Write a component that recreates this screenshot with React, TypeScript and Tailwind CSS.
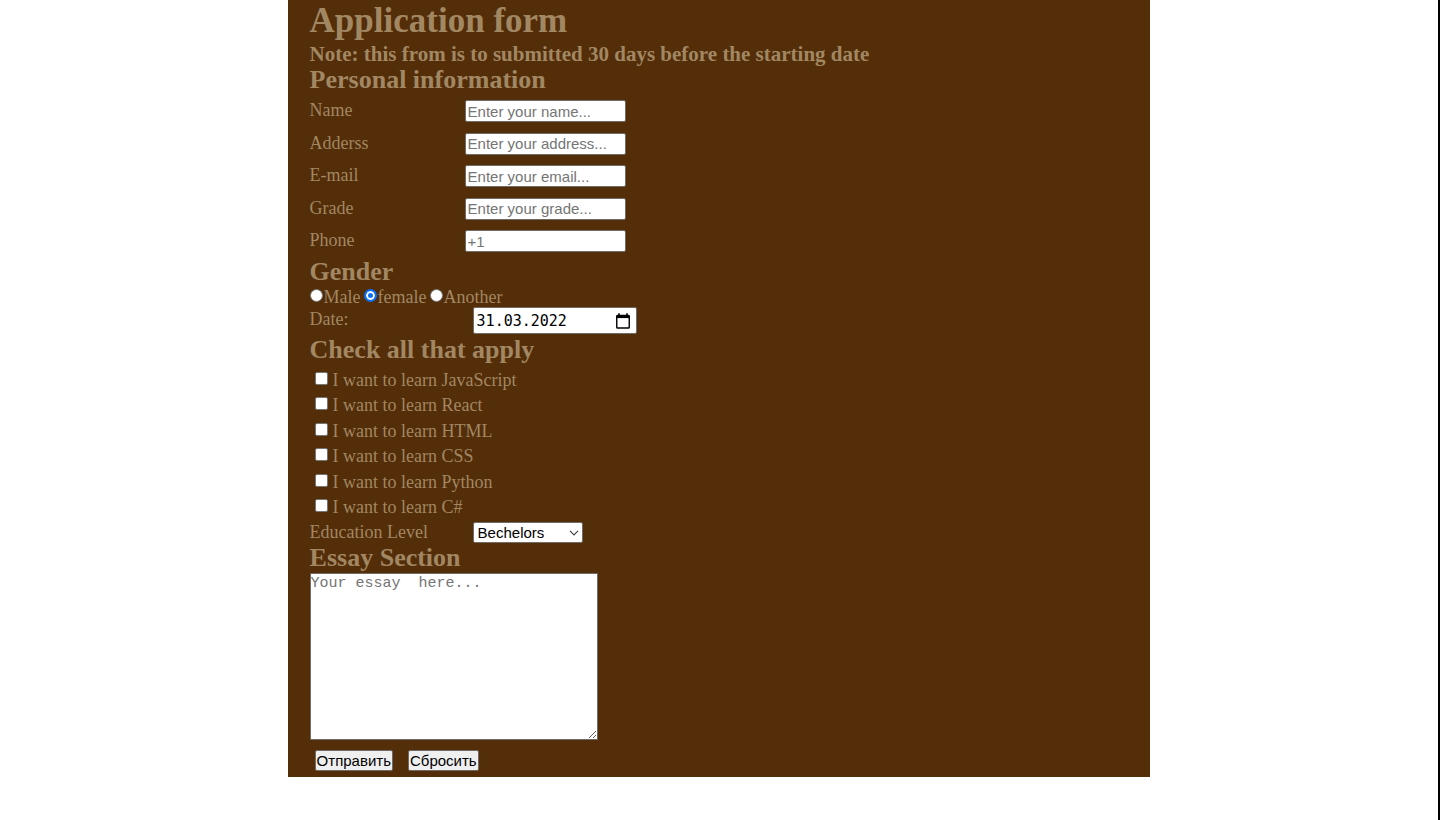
import { useState } from 'react';
import type { ReactNode } from 'react';

const personalFields = [
  { id: 'name', label: 'Name', type: 'text', placeholder: 'Enter your name...' },
  { id: 'address', label: 'Adderss', type: 'text', placeholder: 'Enter your address...' },
  { id: 'email', label: 'E-mail', type: 'email', placeholder: 'Enter your email...' },
  { id: 'grade', label: 'Grade', type: 'text', placeholder: 'Enter your grade...' },
  { id: 'phone', label: 'Phone', type: 'tel', placeholder: '+1' },
];

const genders = ['Male', 'female', 'Another'];
const topics = ['JavaScript', 'React', 'HTML', 'CSS', 'Python', 'C#'];
const levels = ['Bechelors', 'Masters', 'Doctorate'];

function SectionTitle({ children }: { children: ReactNode }) {
  return <h2 className="text-[26px] leading-7 font-bold">{children}</h2>;
}

function CalendarIcon() {
  return (
    <svg viewBox="0 0 16 16" className="size-4" fill="none" stroke="#000" aria-hidden="true">
      <rect x="1.75" y="2.5" width="12.5" height="12.5" rx="0.8" strokeWidth="1.4" />
      <path d="M1.5 3.8h13" strokeWidth="2.6" />
      <path d="M4 0.3v3M12 0.3v3" strokeWidth="1.6" />
    </svg>
  );
}

function ChevronIcon() {
  return (
    <svg viewBox="0 0 10 6" className="h-1.5 w-2.5" fill="none" stroke="#444" strokeWidth="1.2" aria-hidden="true">
      <path d="M1 0.8 5 4.8 9 0.8" />
    </svg>
  );
}

export default function App() {
  const [gender, setGender] = useState('female');
  const [date, setDate] = useState('31.03.2022');

  return (
    <div className="min-h-screen border-r-2 border-black bg-white">
      <form
        className="mx-auto w-3/5 bg-[#542d09] px-[22px] pb-[6px] font-['Liberation_Serif',serif] text-[18px] leading-5 text-[#a18762]"
        onSubmit={(e) => e.preventDefault()}
      >
        <h1 className="text-[35px] leading-[42px] font-bold">Application form</h1>
        <h3 className="text-[21px] leading-6 font-bold">
          Note: this from is to submitted 30 days before the starting date
        </h3>
        <SectionTitle>Personal information</SectionTitle>
        <div className="grid h-[164px] content-between py-[6px]">
          {personalFields.map((field) => (
            <div key={field.id} className="flex items-start">
              <label htmlFor={field.id} className="w-[155px]">
                {field.label}
              </label>
              <input
                id={field.id}
                type={field.type}
                placeholder={field.placeholder}
                className="h-[22px] w-[161px] rounded-[2px] border border-[#6f6b66] bg-white px-[2px] font-['Liberation_Sans',sans-serif] text-[15px] leading-5 text-black placeholder:text-[#757575]"
              />
            </div>
          ))}
        </div>

        <SectionTitle>Gender</SectionTitle>
        <div className="flex h-[21px] items-start gap-[3px]" role="radiogroup" aria-label="Gender">
          {genders.map((option) => (
            <label key={option} className="flex items-start leading-[22px]">
              <input
                type="radio"
                name="gender"
                checked={gender === option}
                onChange={() => setGender(option)}
                className="mt-[3px] mr-px size-[13px] appearance-none rounded-full border border-[#767676] bg-white checked:border-2 checked:border-[#0a6ff5] checked:bg-[#0a6ff5] checked:shadow-[inset_0_0_0_2px_white]"
              />
              {option}
            </label>
          ))}
        </div>
        <div className="flex items-start">
          <label htmlFor="date" className="w-[163px] leading-6">
            Date:
          </label>
          <div className="flex h-[27px] w-[164px] items-center justify-between rounded-[2px] border border-[#6f6b66] bg-white pr-[5px] pl-[3px]">
            <input
              id="date"
              type="text"
              value={date}
              onChange={(e) => setDate(e.target.value)}
              className="w-[120px] bg-transparent font-['DejaVu_Sans_Mono',monospace] text-[15px] leading-5 text-black outline-none"
            />
            <button type="button" aria-label="Open calendar">
              <CalendarIcon />
            </button>
          </div>
        </div>

        <div className="pt-[2px]">
          <SectionTitle>Check all that apply</SectionTitle>
        </div>
        <div className="mt-[3px] grid h-[153px] grid-rows-6 pl-[5px]">
          {topics.map((topic) => (
            <label key={topic} className="flex items-center gap-[5px]">
              <input
                type="checkbox"
                className="mb-[3px] size-[13px] appearance-none rounded-[2px] border border-[#767676] bg-white checked:bg-[#0a6ff5]"
              />
              I want to learn {topic}
            </label>
          ))}
        </div>

        <div className="mt-[2px] flex items-start">
          <label htmlFor="level" className="w-[163px]">
            Education Level
          </label>
          <div className="grid w-[110px] items-center">
            <select
              id="level"
              className="col-start-1 row-start-1 h-[21px] appearance-none rounded-[2px] border border-[#6f6b66] bg-white pl-1 font-['Liberation_Sans',sans-serif] text-[15px] leading-[18px] text-black"
            >
              {levels.map((level) => (
                <option key={level}>{level}</option>
              ))}
            </select>
            <span className="pointer-events-none col-start-1 row-start-1 mr-1 justify-self-end">
              <ChevronIcon />
            </span>
          </div>
        </div>

        <div className="pt-px">
          <SectionTitle>
            <label htmlFor="essay">Essay Section</label>
          </SectionTitle>
        </div>
        <textarea
          id="essay"
          placeholder="Your essay  here..."
          className="mt-px block h-[167px] w-[288px] rounded-[1px] border border-[#6f6b66] bg-white px-0 py-px font-['Liberation_Mono',monospace] text-[15px] leading-[18px] text-black placeholder:text-[#757575]"
        />
        <div className="flex gap-[15px] pt-[10px] pl-[5px] font-['Liberation_Sans',sans-serif] text-[15px] text-black">
          <button type="submit" className="h-[21px] rounded-[2px] border border-[#6f6b66] bg-[#efefef] px-px leading-[18px]">
            Отправить
          </button>
          <button type="reset" className="h-[21px] rounded-[2px] border border-[#6f6b66] bg-[#efefef] px-px leading-[18px]">
            Сбросить
          </button>
        </div>
      </form>
    </div>
  );
}
